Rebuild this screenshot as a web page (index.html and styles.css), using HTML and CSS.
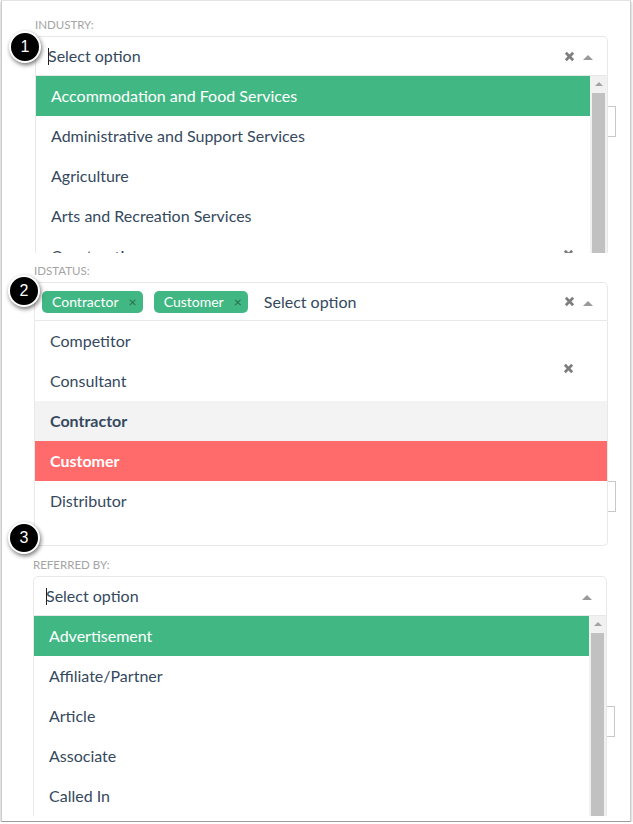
FILE: index.html
```html
<!DOCTYPE html>
<html>
<head>
<meta charset="utf-8">
<link rel="stylesheet" href="styles.css">
</head>
<body>
<div class="frame">
  <section class="panel p1">
    <div class="label">INDUSTRY:</div>
    <div class="ms w573">
      <div class="head">
        <span class="caret"></span><span class="input">Select option</span>
        <span class="grow"></span>
        <svg class="clear" viewBox="0 0 12 12"><path d="M2 2 L10 10 M10 2 L2 10"/></svg>
        <span class="arrow"></span>
      </div>
      <div class="list scrolled">
        <div class="opts">
          <div class="opt hl">Accommodation and Food Services</div>
          <div class="opt">Administrative and Support Services</div>
          <div class="opt">Agriculture</div>
          <div class="opt">Arts and Recreation Services</div>
          <div class="opt">Construction</div>
        </div>
        <div class="sb"><span class="sb-up"></span><span class="sb-thumb"></span></div>
      </div>
    </div>
    <div class="stub st1"></div>
    <svg class="clear ghost g1" viewBox="0 0 12 12"><path d="M2 2 L10 10 M10 2 L2 10"/></svg>
  </section>

  <section class="panel p2">
    <div class="label">IDSTATUS:</div>
    <div class="ms w574">
      <div class="head tags">
        <span class="tag">Contractor<span class="tx">×</span></span>
        <span class="tag">Customer<span class="tx">×</span></span>
        <span class="input after-tags">Select option</span>
        <span class="grow"></span>
        <svg class="clear" viewBox="0 0 12 12"><path d="M2 2 L10 10 M10 2 L2 10"/></svg>
        <span class="arrow"></span>
      </div>
      <div class="list framed">
        <div class="opts">
          <div class="opt">Competitor</div>
          <div class="opt">Consultant</div>
          <div class="opt sel">Contractor</div>
          <div class="opt sel rm">Customer</div>
          <div class="opt">Distributor</div>
        </div>
      </div>
    </div>
    <div class="stub st2"></div>
    <svg class="clear ghost g2" viewBox="0 0 12 12"><path d="M2 2 L10 10 M10 2 L2 10"/></svg>
  </section>

  <section class="panel p3">
    <div class="label">REFERRED BY:</div>
    <div class="ms w574">
      <div class="head">
        <span class="caret"></span><span class="input">Select option</span>
        <span class="grow"></span>
        <span class="arrow"></span>
      </div>
      <div class="list scrolled">
        <div class="opts">
          <div class="opt hl">Advertisement</div>
          <div class="opt">Affiliate/Partner</div>
          <div class="opt">Article</div>
          <div class="opt">Associate</div>
          <div class="opt">Called In</div>
        </div>
        <div class="sb"><span class="sb-up"></span><span class="sb-thumb"></span></div>
      </div>
    </div>
    <div class="stub st3"></div>
  </section>

  <span class="badge b1">1</span>
  <span class="badge b2">2</span>
  <span class="badge b3">3</span>
</div>
</body>
</html>
```

FILE: styles.css
```css
* { box-sizing: border-box; }
html, body { margin: 0; padding: 0; background: #fff; }
body { font-family: Lato, "Noto Sans", "Liberation Sans", sans-serif; color: #35495e; }

.frame {
  position: relative;
  margin-left: 1px;
  width: 630px;
  height: 822px;
  border-left: 1px solid #cdcdcd;
  border-right: 1px solid #cdcdcd;
  border-top: 1px solid #e4e4e4;
  border-bottom: 1px solid #9c9c9c;
  box-shadow: 0 2px 3px rgba(0,0,0,0.3);
  background: #fff;
}

.panel { position: relative; overflow: hidden; }
.p1 { height: 252px; padding: 17px 0 0 33px; }
.p2 { height: 293px; padding: 11px 0 0 32px; }
.p3 { height: 275px; padding: 12px 0 0 31px; }

.label {
  font-size: 11.5px;
  line-height: 14px;
  height: 14px;
  margin-bottom: 4px;
  color: #a4a4a4;
}

.ms { position: relative; z-index: 1; background: #fff; }
.w573 { width: 573px; }
.w574 { width: 574px; }

.head {
  display: flex;
  align-items: center;
  height: 40px;
  border: 1px solid #e8e8e8;
  border-radius: 5px 5px 0 0;
  padding: 0 14px 0 12px;
  background: #fff;
}
.head.tags { height: 39px; padding-left: 7px; }

.caret { width: 1px; height: 17px; background: #222; margin-right: -1px; position: relative; z-index: 1; }
.input { font-size: 16px; line-height: 20px; color: #35495e; }
.input.after-tags { margin-left: 5px; }
.grow { flex: 1; }

.clear { width: 11px; height: 11px; display: block; margin-right: 8px; }
.clear path { stroke: #7e7e7e; stroke-width: 3; fill: none; }

.arrow {
  width: 0; height: 0;
  border-left: 5px solid transparent;
  border-right: 5px solid transparent;
  border-bottom: 5px solid #9a9a9a;
  margin-top: 3px;
}

.tag {
  display: inline-flex;
  align-items: center;
  height: 22px;
  padding: 0 6px 0 10px;
  margin-right: 11px;
  background: #41b883;
  color: #fff;
  border-radius: 5px;
  font-size: 14px;
}
.tx { color: #266d4d; font-size: 14px; margin-left: 10px; line-height: 1; }

.list {
  display: flex;
  border-left: 1px solid #e8e8e8;
  border-right: 1px solid #e8e8e8;
  background: #fff;
}
.list.scrolled { height: 200px; }
.list.framed {
  border-bottom: 1px solid #e8e8e8;
  border-radius: 0 0 5px 5px;
  padding-bottom: 24px;
}
.opts { flex: 1; }
.opt {
  height: 40px;
  line-height: 40px;
  padding-left: 15px;
  font-size: 16px;
  color: #35495e;
  white-space: nowrap;
}
.opt.hl { background: #41b883; color: #fff; }
.opt.sel { background: #f3f3f3; font-weight: 700; }
.opt.sel.rm { background: #ff6a6a; color: #fff; }

.sb {
  width: 17px;
  background: #f1f1f1;
  display: flex;
  flex-direction: column;
  align-items: center;
}
.sb-up {
  width: 0; height: 0;
  margin: 6px 0 5px;
  border-left: 4px solid transparent;
  border-right: 4px solid transparent;
  border-bottom: 4px solid #a3a3a3;
}
.sb-thumb { width: 13px; flex: 1; background: #c1c1c1; margin-top: 2px; }

.stub {
  position: absolute;
  width: 8px;
  height: 31px;
  border: 1px solid #c8c8c8;
  border-left: none;
}
.st1 { left: 606px; top: 105px; }
.st2 { left: 606px; top: 228px; }
.st3 { left: 605px; top: 160px; }

.ghost { position: absolute; z-index: 2; margin: 0; }
.g1 { left: 561px; top: 248px; }
.g2 { left: 561px; top: 110px; }

.badge {
  position: absolute;
  z-index: 5;
  width: 32px;
  height: 32px;
  border-radius: 50%;
  background: #000;
  border: 2px solid #fff;
  box-shadow: 1px 2px 4px rgba(0,0,0,0.55);
  color: #fff;
  font-family: "Liberation Sans", Arial, sans-serif;
  font-size: 16px;
  line-height: 28px;
  text-align: center;
}
.b1 { left: 7px; top: 30px; }
.b2 { left: 6px; top: 274px; }
.b3 { left: 6px; top: 521px; }
```
